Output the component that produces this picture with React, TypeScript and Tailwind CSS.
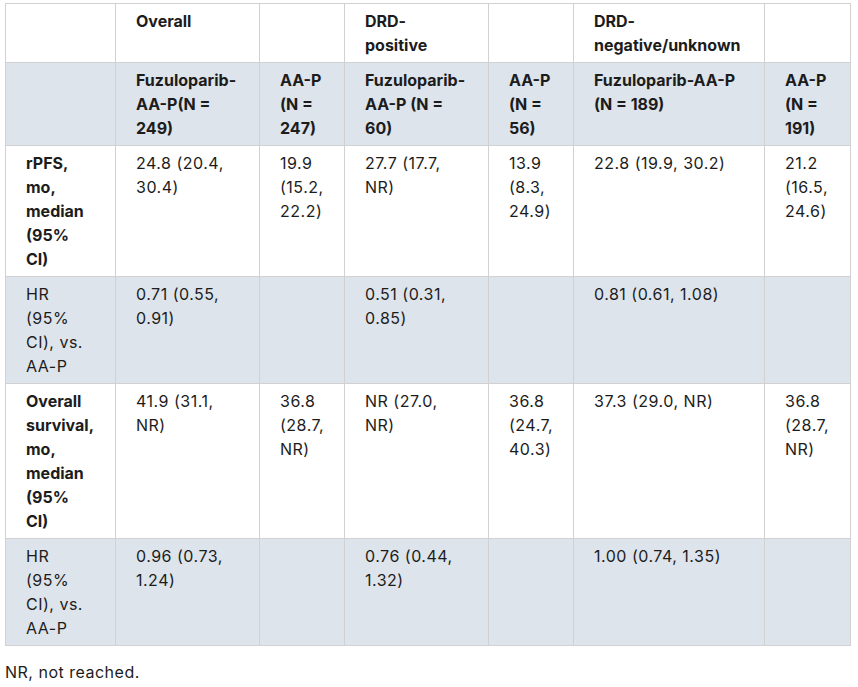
const headCell = "border border-[#d1d1d1] px-5 py-[5px] align-top font-bold text-left tracking-normal";
const cell = "border border-[#d1d1d1] px-5 py-[5px] align-top";

type Row = { label: string; bold: boolean; values: string[] };

const rows: Row[] = [
  {
    label: "rPFS, mo, median (95% CI)",
    bold: true,
    values: ["24.8 (20.4, 30.4)", "19.9 (15.2, 22.2)", "27.7 (17.7, NR)", "13.9 (8.3, 24.9)", "22.8 (19.9, 30.2)", "21.2 (16.5, 24.6)"],
  },
  {
    label: "HR (95% CI), vs. AA-P",
    bold: false,
    values: ["0.71 (0.55, 0.91)", "", "0.51 (0.31, 0.85)", "", "0.81 (0.61, 1.08)", ""],
  },
  {
    label: "Overall survival, mo, median (95% CI)",
    bold: true,
    values: ["41.9 (31.1, NR)", "36.8 (28.7, NR)", "NR (27.0, NR)", "36.8 (24.7, 40.3)", "37.3 (29.0, NR)", "36.8 (28.7, NR)"],
  },
  {
    label: "HR (95% CI), vs. AA-P",
    bold: false,
    values: ["0.96 (0.73, 1.24)", "", "0.76 (0.44, 1.32)", "", "1.00 (0.74, 1.35)", ""],
  },
];

export default function App() {
  return (
    <div className="min-h-screen bg-white pt-[3px] pl-[5px] text-[16px] leading-6 tracking-[0.5px] text-[#1c1c1c] font-['Inter','Liberation_Sans',sans-serif]">
      <table className="table-fixed border-collapse w-[845px]">
        <colgroup>
          <col className="w-[110px]" />
          <col className="w-[144px]" />
          <col className="w-[85px]" />
          <col className="w-[144px]" />
          <col className="w-[85px]" />
          <col className="w-[191px]" />
          <col className="w-[86px]" />
        </colgroup>
        <thead>
          <tr className="bg-white">
            <th className={headCell}></th>
            <th className={headCell}>Overall</th>
            <th className={headCell}></th>
            <th className={headCell}>DRD-positive</th>
            <th className={headCell}></th>
            <th className={headCell}>DRD-negative/unknown</th>
            <th className={headCell}></th>
          </tr>
          <tr className="bg-[#dee4eb]">
            <th className={headCell}></th>
            <th className={headCell}>Fuzuloparib-AA-P(N = 249)</th>
            <th className={headCell}>AA-P (N = 247)</th>
            <th className={headCell}>Fuzuloparib-AA-P (N = 60)</th>
            <th className={headCell}>AA-P (N = 56)</th>
            <th className={headCell}>Fuzuloparib-AA-P (N = 189)</th>
            <th className={headCell}>AA-P (N = 191)</th>
          </tr>
        </thead>
        <tbody>
          {rows.map((r, i) => (
            <tr key={i} className={i % 2 === 0 ? "bg-white" : "bg-[#dee4eb]"}>
              <td className={`${cell} ${r.bold ? "font-bold tracking-normal" : ""}`}>{r.label}</td>
              {r.values.map((v, j) => (
                <td key={j} className={cell}>{v}</td>
              ))}
            </tr>
          ))}
        </tbody>
      </table>
      <p className="mt-[14px]">NR, not reached.</p>
    </div>
  );
}
